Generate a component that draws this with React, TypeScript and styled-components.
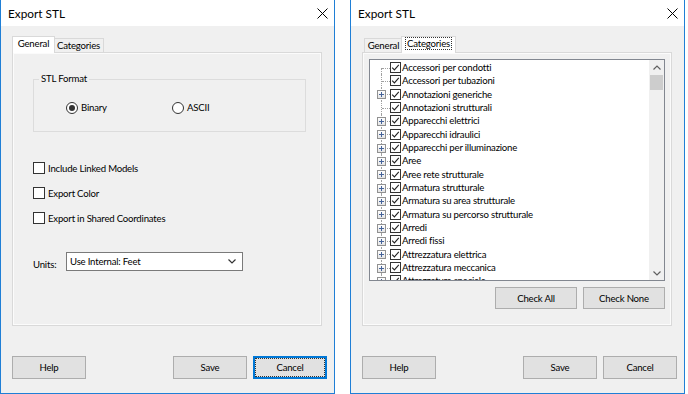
import styled, { createGlobalStyle, css } from "styled-components"

const GlobalStyle = createGlobalStyle`
  html, body {
    margin: 0;
    padding: 0;
    background: #fff;
  }
  body {
    font-family: Lato, "Liberation Sans", Arial, sans-serif;
    font-size: 9.6px;
    letter-spacing: -0.2px;
    color: #000;
  }
`

const Screen = styled.div`
  display: flex;
  gap: 15px;
  width: 688px;
  height: 394px;
  overflow: hidden;
`

const Window = styled.div`
  width: 335px;
  height: 394px;
  flex: none;
  box-sizing: border-box;
  border: 1px solid #1f7fd6;
  border-top: none;
  background: #f0f0f0;
  display: flex;
  flex-direction: column;
`

const TitleBar = styled.div`
  height: 26px;
  flex: none;
  background: #fff;
  display: flex;
  align-items: center;
  justify-content: space-between;
  padding: 0 3px 0 7px;
  font-size: 11.8px;
  letter-spacing: 0;
`

const TabArea = styled.div`
  margin: 10px 12px 0 11px;
  display: flex;
  flex-direction: column;
`

const TabStrip = styled.div`
  display: flex;
  align-items: flex-end;
  height: 16px;
  padding-left: 2px;
`

const Tab = styled.div<{ $active?: boolean; $w: number }>`
  box-sizing: border-box;
  width: ${(p) => p.$w}px;
  height: 14px;
  border: 1px solid #d9d9d9;
  border-bottom: none;
  background: #f0f0f0;
  display: flex;
  align-items: center;
  justify-content: center;
  ${(p) =>
    p.$active &&
    css`
      position: relative;
      z-index: 1;
      width: ${p.$w + 4}px;
      height: 17px;
      margin: 0 -2px -1px;
      background: #fff;
      align-items: flex-start;
      padding-top: 1px;
    `}
`

const TabLabel = styled.span<{ $focus?: boolean }>`
  line-height: 11px;
  padding: 0 1px;
  ${(p) =>
    p.$focus &&
    css`
      outline: 1px dotted #333;
    `}
`

const TabPanel = styled.div`
  height: 274px;
  box-sizing: border-box;
  border: 1px solid #d9d9d9;
  box-shadow: inset 0 0 0 1px #fbfbfb;
  display: flex;
  flex-direction: column;
`

const GeneralPage = styled.div`
  padding: 20px 0 0 20px;
  display: flex;
  flex-direction: column;
`

const GroupBox = styled.fieldset`
  margin: 0;
  width: 273px;
  height: 59px;
  box-sizing: border-box;
  border: 1px solid #dcdcdc;
  padding: 0;
  min-width: 0;
`

const Legend = styled.legend`
  margin-left: 5px;
  padding: 0 2px;
  line-height: 12px;
`

const RadioRow = styled.div`
  display: flex;
  margin-top: 16px;
  padding-left: 32px;
  height: 13px;
  align-items: center;
`

const RadioOption = styled.label<{ $w?: number }>`
  display: flex;
  align-items: center;
  gap: 3px;
  width: ${(p) => (p.$w ? `${p.$w}px` : "auto")};
`

const RadioCircle = styled.span<{ $checked?: boolean }>`
  width: 12px;
  height: 12px;
  box-sizing: border-box;
  border: 1px solid #333;
  border-radius: 50%;
  background: #fff;
  display: flex;
  align-items: center;
  justify-content: center;
  &::after {
    content: "";
    width: 6px;
    height: 6px;
    border-radius: 50%;
    background: ${(p) => (p.$checked ? "#333" : "transparent")};
  }
`

const CheckList = styled.div`
  display: flex;
  flex-direction: column;
  gap: 13px;
  margin-top: 30px;
`

const CheckRow = styled.label`
  display: flex;
  align-items: center;
  gap: 3px;
  height: 12px;
`

const CheckBox = styled.span`
  width: 12px;
  height: 12px;
  box-sizing: border-box;
  border: 1px solid #333;
  background: #fff;
  flex: none;
`

const UnitsRow = styled.div`
  display: flex;
  margin-top: 28px;
`

const UnitsLabel = styled.span`
  width: 33px;
  padding-top: 7px;
`

const Combo = styled.div`
  width: 177px;
  height: 19px;
  box-sizing: border-box;
  border: 1px solid #7a7a7a;
  background: #fff;
  display: flex;
  align-items: center;
  justify-content: space-between;
  padding: 0 6px 0 3px;
`

const ButtonBar = styled.div`
  display: flex;
  gap: 6px;
  margin-top: 30px;
  padding: 0 7px 0 11px;
`

const Spacer = styled.div`
  flex: 1;
`

const Button = styled.button<{ $w?: number; $h?: number; $focused?: boolean }>`
  width: ${(p) => p.$w ?? 74}px;
  height: ${(p) => p.$h ?? 23}px;
  box-sizing: border-box;
  border: 1px solid #adadad;
  background: #e1e1e1;
  font: inherit;
  letter-spacing: inherit;
  color: #000;
  padding: 0;
  ${(p) =>
    p.$focused &&
    css`
      border-color: #0078d7;
      box-shadow: inset 0 0 0 1px #0078d7;
      outline: 1px dotted #333;
      outline-offset: -3px;
    `}
`

const CategoriesPage = styled.div`
  padding: 6px;
  display: flex;
  flex-direction: column;
  gap: 6px;
`

const Tree = styled.div`
  height: 222px;
  box-sizing: border-box;
  border: 1px solid #828790;
  background: #fff;
  display: flex;
`

const TreeList = styled.div`
  flex: 1;
  overflow: hidden;
  padding-top: 1px;
`

const TreeRow = styled.div<{ $first?: boolean }>`
  position: relative;
  height: 13.33px;
  display: flex;
  align-items: center;
  padding-left: 20px;
  white-space: nowrap;
  &::before {
    content: "";
    position: absolute;
    left: 11px;
    top: ${(p) => (p.$first ? "50%" : "0")};
    bottom: 0;
    border-left: 1px dotted #a0a0a0;
  }
  &::after {
    content: "";
    position: absolute;
    left: 12px;
    width: 8px;
    top: 50%;
    border-top: 1px dotted #a0a0a0;
  }
`

const Expander = styled.span`
  position: absolute;
  left: 7px;
  top: 50%;
  margin-top: -4px;
  width: 9px;
  height: 9px;
  box-sizing: border-box;
  border: 1px solid #919191;
  background: linear-gradient(#ffffff, #e4e4e4);
  z-index: 1;
  display: flex;
  align-items: center;
  justify-content: center;
`

const TreeCheck = styled.span`
  width: 11px;
  height: 11px;
  box-sizing: border-box;
  border: 1px solid #333;
  background: #fff;
  flex: none;
  position: relative;
  z-index: 1;
  display: flex;
  margin-right: 1px;
`

const ScrollBar = styled.div`
  width: 15px;
  background: #f0f0f0;
  display: flex;
  flex-direction: column;
  align-items: center;
`

const ScrollArrow = styled.div`
  height: 14px;
  width: 100%;
  display: flex;
  align-items: center;
  justify-content: center;
`

const ScrollThumb = styled.div`
  width: 13px;
  height: 15px;
  margin-top: 1px;
  background: #cdcdcd;
`

const ActionRow = styled.div`
  display: flex;
  justify-content: flex-end;
  gap: 6px;
`

const categories: [string, boolean][] = [
  ["Accessori per condotti", false],
  ["Accessori per tubazioni", false],
  ["Annotazioni generiche", true],
  ["Annotazioni strutturali", false],
  ["Apparecchi elettrici", true],
  ["Apparecchi idraulici", true],
  ["Apparecchi per illuminazione", true],
  ["Aree", true],
  ["Aree rete strutturale", true],
  ["Armatura strutturale", true],
  ["Armatura su area strutturale", true],
  ["Armatura su percorso strutturale", true],
  ["Arredi", true],
  ["Arredi fissi", true],
  ["Attrezzatura elettrica", true],
  ["Attrezzatura meccanica", true],
  ["Attrezzatura speciale", true],
]

const CloseIcon = () => (
  <svg width="11" height="11" viewBox="0 0 11 11" style={{ marginRight: 3 }}>
    <path d="M0.5 0.5L10.5 10.5M10.5 0.5L0.5 10.5" stroke="#000" strokeWidth="1" />
  </svg>
)

const Chevron = ({ up, color = "#333" }: { up?: boolean; color?: string }) => (
  <svg width="8" height="5" viewBox="0 0 8 5">
    <path
      d={up ? "M0.5 4.5L4 1L7.5 4.5" : "M0.5 0.5L4 4L7.5 0.5"}
      fill="none"
      stroke={color}
      strokeWidth="1.2"
    />
  </svg>
)

const Tick = () => (
  <svg width="9" height="9" viewBox="0 0 9 9">
    <path d="M1.2 4.6L3.4 6.9L7.8 1.8" fill="none" stroke="#222" strokeWidth="1.1" />
  </svg>
)

const Plus = () => (
  <svg width="5" height="5" viewBox="0 0 5 5">
    <path d="M0 2.5H5M2.5 0V5" stroke="#45639a" strokeWidth="1" />
  </svg>
)

const DialogFrame = ({ tab, children }: { tab: "general" | "categories"; children: React.ReactNode }) => (
  <Window>
    <TitleBar>
      <span>Export STL</span>
      <CloseIcon />
    </TitleBar>
    <TabArea>
      <TabStrip>
        <Tab $w={39} $active={tab === "general"}>
          <TabLabel>General</TabLabel>
        </Tab>
        <Tab $w={51} $active={tab === "categories"}>
          <TabLabel $focus={tab === "categories"}>Categories</TabLabel>
        </Tab>
      </TabStrip>
      <TabPanel>{children}</TabPanel>
    </TabArea>
    <ButtonBar>
      <Button>Help</Button>
      <Spacer />
      <Button>Save</Button>
      <Button $focused={tab === "general"}>Cancel</Button>
    </ButtonBar>
  </Window>
)

const App = () => (
  <>
    <GlobalStyle />
    <Screen>
      <DialogFrame tab="general">
        <GeneralPage>
          <GroupBox>
            <Legend>STL Format</Legend>
            <RadioRow>
              <RadioOption $w={106}>
                <RadioCircle $checked />
                Binary
              </RadioOption>
              <RadioOption>
                <RadioCircle />
                ASCII
              </RadioOption>
            </RadioRow>
          </GroupBox>
          <CheckList>
            <CheckRow>
              <CheckBox />
              Include Linked Models
            </CheckRow>
            <CheckRow>
              <CheckBox />
              Export Color
            </CheckRow>
            <CheckRow>
              <CheckBox />
              Export in Shared Coordinates
            </CheckRow>
          </CheckList>
          <UnitsRow>
            <UnitsLabel>Units:</UnitsLabel>
            <Combo>
              <span>Use Internal: Feet</span>
              <Chevron />
            </Combo>
          </UnitsRow>
        </GeneralPage>
      </DialogFrame>

      <DialogFrame tab="categories">
        <CategoriesPage>
          <Tree>
            <TreeList>
              {categories.map(([name, expandable], i) => (
                <TreeRow key={name} $first={i === 0}>
                  {expandable && (
                    <Expander>
                      <Plus />
                    </Expander>
                  )}
                  <TreeCheck>
                    <Tick />
                  </TreeCheck>
                  {name}
                </TreeRow>
              ))}
            </TreeList>
            <ScrollBar>
              <ScrollArrow>
                <Chevron up color="#606060" />
              </ScrollArrow>
              <ScrollThumb />
              <Spacer />
              <ScrollArrow>
                <Chevron color="#606060" />
              </ScrollArrow>
            </ScrollBar>
          </Tree>
          <ActionRow>
            <Button $w={82} $h={22}>
              Check All
            </Button>
            <Button $w={82} $h={22}>
              Check None
            </Button>
          </ActionRow>
        </CategoriesPage>
      </DialogFrame>
    </Screen>
  </>
)

export default App
